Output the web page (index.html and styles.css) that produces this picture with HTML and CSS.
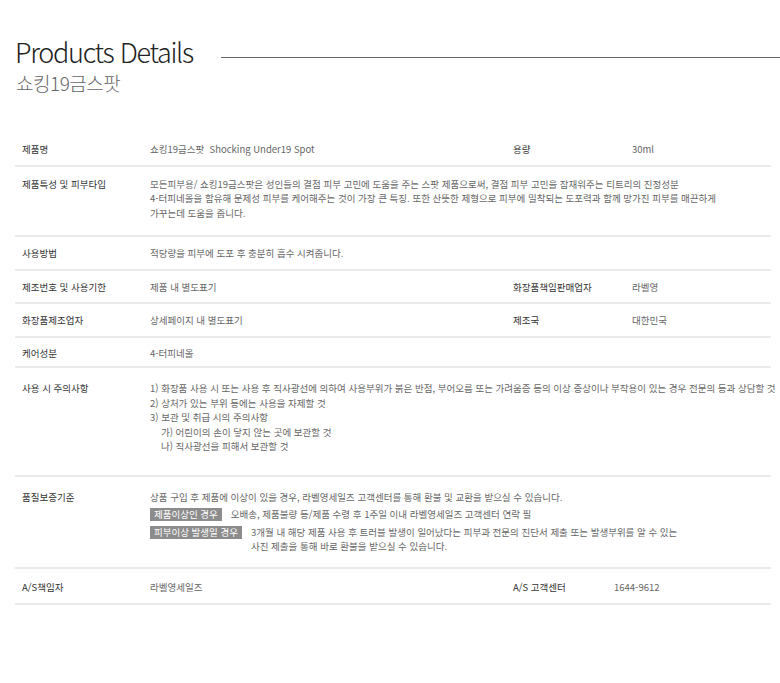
FILE: index.html
```html
<!DOCTYPE html>
<html lang="ko">
<head>
  <meta charset="UTF-8" />
  <meta name="viewport" content="width=device-width, initial-scale=1.0"/>
  <title>Products Details - 쇼킹19금스팟</title>
  <link rel="stylesheet" href="styles.css">
</head>
<body>

  <div class="page">
    <div class="title-row">
      <h1>Products Details</h1>
      <span class="title-line"></span>
    </div>
    <p class="subtitle">쇼킹19금스팟</p>

    <div class="spec">
      <div class="spec-row">
        <div class="label">제품명</div>
        <div class="value">쇼킹19금스팟&nbsp; Shocking Under19 Spot</div>
        <div class="label side">용량</div>
        <div class="value">30ml</div>
      </div>

      <div class="spec-row tall">
        <div class="label">제품특성 및 피부타입</div>
        <div class="value wide">
          <div class="line">모든피부용/ 쇼킹19금스팟은 성인들의 결점 피부 고민에 도움을 주는 스팟 제품으로써, 결점 피부 고민을 잠재워주는 티트리의 진정성분</div>
          <div class="line">4-터피네올을 함유해 문제성 피부를 케어해주는 것이 가장 큰 특징. 또한 산뜻한 제형으로 피부에 밀착되는 도포력과 함께 망가진 피부를 매끈하게</div>
          <div class="line">가꾸는데 도움을 줍니다.</div>
        </div>
      </div>

      <div class="spec-row">
        <div class="label">사용방법</div>
        <div class="value wide">적당량을 피부에 도포 후 충분히 흡수 시켜줍니다.</div>
      </div>

      <div class="spec-row">
        <div class="label">제조번호 및 사용기한</div>
        <div class="value">제품 내 별도표기</div>
        <div class="label side">화장품책임판매업자</div>
        <div class="value">라벨영</div>
      </div>

      <div class="spec-row">
        <div class="label">화장품제조업자</div>
        <div class="value">상세페이지 내 별도표기</div>
        <div class="label side">제조국</div>
        <div class="value">대한민국</div>
      </div>

      <div class="spec-row short">
        <div class="label">케어성분</div>
        <div class="value wide">4-터피네올</div>
      </div>

      <div class="spec-row caution">
        <div class="label">사용 시 주의사항</div>
        <div class="value wide">
          <div class="line">1) 화장품 사용 시 또는 사용 후 직사광선에 의하여 사용부위가 붉은 반점, 부어오름 또는 가려움증 등의 이상 증상이나 부작용이 있는 경우 전문의 등과 상담할 것</div>
          <div class="line">2) 상처가 있는 부위 등에는 사용을 자제할 것</div>
          <div class="line">3) 보관 및 취급 시의 주의사항</div>
          <div class="line sub">가) 어린이의 손이 닿지 않는 곳에 보관할 것</div>
          <div class="line sub">나) 직사광선을 피해서 보관할 것</div>
        </div>
      </div>

      <div class="spec-row quality">
        <div class="label">품질보증기준</div>
        <div class="value wide">
          <div class="line">상품 구입 후 제품에 이상이 있을 경우, 라벨영세일즈 고객센터를 통해 환불 및 교환을 받으실 수 있습니다.</div>
          <div class="case">
            <span class="badge">제품이상인 경우</span>
            <span>오배송, 제품불량 등/제품 수령 후 1주일 이내 라벨영세일즈 고객센터 연락 필</span>
          </div>
          <div class="case">
            <span class="badge">피부이상 발생일 경우</span>
            <span>3개월 내 해당 제품 사용 후 트러블 발생이 일어났다는 피부과 전문의 진단서 제출 또는 발생부위를 알 수 있는<br>사진 제출을 통해 바로 환불을 받으실 수 있습니다.</span>
          </div>
        </div>
      </div>

      <div class="spec-row as">
        <div class="label">A/S책임자</div>
        <div class="value">라벨영세일즈</div>
        <div class="label side">A/S 고객센터</div>
        <div class="value">1644-9612</div>
      </div>
    </div>
  </div>

</body>
</html>
```

FILE: styles.css
```css
* {
  box-sizing: border-box;
  margin: 0;
  padding: 0;
}

body {
  background: #fff;
  font-family: "Noto Sans CJK KR", "Noto Sans", sans-serif;
  color: #333;
}

.page {
  padding: 35px 0 0 15px;
}

.title-row {
  display: flex;
  align-items: flex-start;
}

.title-row h1 {
  font-size: 27px;
  font-weight: 300;
  letter-spacing: -1.3px;
  line-height: 34px;
  color: #222;
}

.title-line {
  flex: 1;
  height: 1px;
  background: #666;
  margin: 22px 0 0 28px;
}

.subtitle {
  font-size: 19px;
  font-weight: 300;
  letter-spacing: -0.5px;
  line-height: 24px;
  color: #666;
  margin-top: 2px;
  padding-left: 1px;
}

.spec {
  width: 756px;
  margin-top: 38px;
  font-size: 9.5px;
  line-height: 14.5px;
}

.spec-row {
  display: grid;
  grid-template-columns: 135px 363px 119px 1fr;
  padding: 9px 0 8px;
  border-bottom: 2px solid #ebebeb;
}

.spec-row.short {
  padding: 8px 0 6px;
}

.spec-row.tall {
  padding: 10px 0 15px;
}

.spec-row.caution {
  padding: 13px 0 21px;
}

.spec-row.quality {
  padding: 13px 0 13px;
}

.spec-row.as {
  grid-template-columns: 135px 363px 101px 1fr;
  padding: 11px 0 9px;
}

.label {
  padding-left: 7px;
  color: #333;
}

.label.side {
  padding-left: 0;
}

.value {
  color: #666;
}

.value.wide {
  grid-column: span 3;
}

.line {
  white-space: nowrap;
}

.line.sub {
  padding-left: 11px;
}

.case {
  display: flex;
  align-items: flex-start;
  gap: 9px;
  margin-top: 3px;
}

.badge {
  flex-shrink: 0;
  background: #8c8c8c;
  color: #fff;
  padding: 0 4px;
  line-height: 13px;
  margin-top: 1px;
}
```
